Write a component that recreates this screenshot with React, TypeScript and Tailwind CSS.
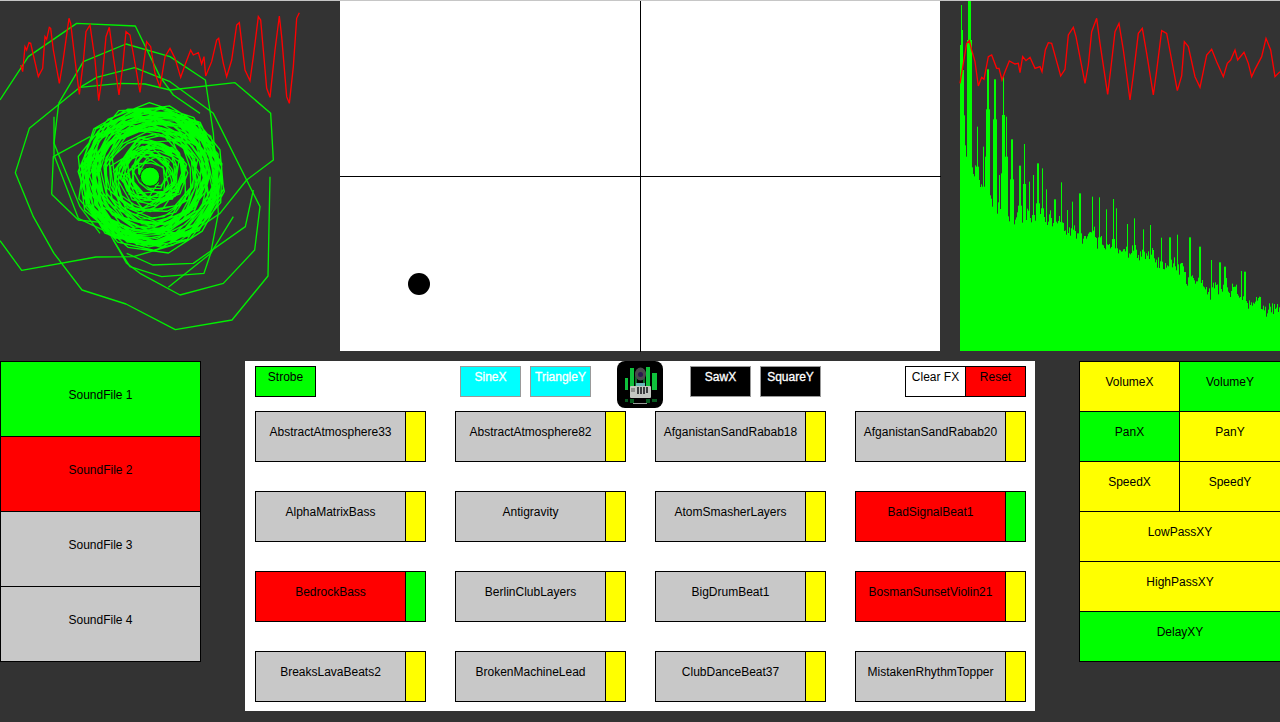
const trackRows = [
  [
    { name: 'AbstractAtmosphere33' },
    { name: 'AbstractAtmosphere82' },
    { name: 'AfganistanSandRabab18' },
    { name: 'AfganistanSandRabab20' },
  ],
  [
    { name: 'AlphaMatrixBass' },
    { name: 'Antigravity' },
    { name: 'AtomSmasherLayers' },
    { name: 'BadSignalBeat1', playing: true, looped: true },
  ],
  [
    { name: 'BedrockBass', playing: true, looped: true },
    { name: 'BerlinClubLayers' },
    { name: 'BigDrumBeat1' },
    { name: 'BosmanSunsetViolin21', playing: true },
  ],
  [
    { name: 'BreaksLavaBeats2' },
    { name: 'BrokenMachineLead' },
    { name: 'ClubDanceBeat37' },
    { name: 'MistakenRhythmTopper' },
  ],
]

const tracks = trackRows.flat()

// all canvas drawings use 3x coordinates, read off the zoomed reference
const leftWave =
  '62,195 68,215 75,140 80,150 87,128 92,130 100,165 115,230 128,205 135,110 140,118 148,82 152,85 160,150 178,250 188,190 207,55 212,70 225,180 238,283 250,185 258,95 270,75 285,180 296,302 308,220 318,110 328,82 340,170 357,285 368,200 378,95 390,105 405,190 420,277 430,200 440,125 452,140 465,220 480,262 495,170 510,145 525,175 542,232 555,195 572,150 580,165 595,158 605,192 612,170 617,228 635,185 650,120 656,115 670,190 680,230 695,180 710,75 718,68 735,210 750,242 760,170 775,50 782,60 800,265 810,292 825,150 838,48 845,110 860,290 868,310 880,200 890,55 898,38'

const rightWave =
  '60,250 70,190 80,130 88,122 95,150 105,185 115,258 125,232 132,238 145,170 155,165 170,205 177,205 186,240 195,215 208,183 225,192 235,190 240,218 248,170 258,182 270,172 278,190 285,205 300,200 306,215 316,150 325,128 335,130 362,228 375,208 385,105 400,82 408,110 435,250 445,195 455,95 470,55 480,130 503,283 512,210 525,95 537,70 550,150 570,300 580,225 595,100 607,85 620,160 640,285 650,212 665,92 680,100 695,180 712,272 725,228 733,125 745,140 765,230 780,262 800,165 815,148 830,185 850,230 862,190 872,180 885,150 893,180 912,157 925,190 935,230 945,208 965,170 978,115 992,150 1005,230 1020,215'

const outerTraces = [
  '810,530 804,828 696,960 526,989 378,912 246,870 162,760 100,650 46,518 88,385 240,262 360,250 435,252 510,270 705,248 812,340 820,480 740,540 660,640 520,735 400,770 288,771 65,811 0,722',
  '0,300 85,170 230,70 406,78 480,230 520,285 600,340',
  '176,310 250,185 378,132 510,170 616,240 640,400 655,640 632,760 612,820 485,830 390,800 340,720',
  '176,310 162,430 240,620 300,700',
  '162,350 162,465 235,655 330,700',
  '155,583 160,470 270,410',
  '155,583 235,660 330,670',
  '240,262 290,232 404,203 510,245 640,340 780,620 764,750 670,850 540,885 420,820 380,790 300,650',
  '760,570 736,680 580,790 458,795 380,760',
  '505,862 632,760 700,650',
]

function seeded(seed: number) {
  let value = seed
  return () => {
    value = (value * 16807) % 2147483647
    return value / 2147483647
  }
}

function buildSpiral() {
  const random = seeded(4711)
  const points: string[] = []
  let angle = 0
  for (let i = 0; i < 680; i++) {
    angle += 0.5 + random() * 0.2
    const swell = 0.5 + 0.5 * Math.sin(i * 0.031)
    const radius = 45 + Math.pow(swell, 0.8) * 150 + Math.sin(i * 0.19) * 12 + random() * 22
    const x = 450 + Math.sin(i * 0.013) * 18 + Math.cos(angle) * radius
    const y = 530 + Math.cos(i * 0.017) * 16 + Math.sin(angle) * radius
    points.push(`${x.toFixed(1)},${y.toFixed(1)}`)
  }
  return points.join(' ')
}

const envelope = [
  [60, 250], [72, 340], [76, 470], [100, 490], [125, 550], [150, 590], [200, 640], [300, 660],
  [400, 700], [500, 735], [600, 760], [700, 790], [800, 860], [900, 880], [1000, 930], [1020, 920],
]

const spikes = [
  [64, 15], [67, 90], [86, 0], [89, 0], [92, 0], [113, 380], [130, 440], [141, 350], [144, 208], [165, 238], [178, 525],
  [188, 400], [191, 225], [200, 350], [216, 418], [240, 497], [254, 432], [268, 545], [280, 525], [294, 490],
  [308, 505], [320, 568], [345, 598], [364, 547], [382, 630], [397, 605], [420, 580], [458, 590], [478, 592],
  [500, 628], [520, 597], [530, 625], [562, 672], [584, 655], [610, 688], [632, 675], [665, 713], [690, 712],
  [712, 704], [750, 712], [780, 740], [815, 780], [840, 787], [855, 800], [905, 813], [915, 815],
]

function buildSpectrum() {
  const random = seeded(913)
  let path = ''
  let bump = 0
  for (let i = 0; i < 320; i++) {
    const x = 60 + i * 3
    let seg = 0
    while (seg < envelope.length - 2 && envelope[seg + 1][0] < x) seg++
    const [x0, y0] = envelope[seg]
    const [x1, y1] = envelope[seg + 1]
    // slow wander plus per-bar jitter gives the lumpy top edge
    bump = bump * 0.7 + (random() - 0.5) * 34
    let top = y0 + ((y1 - y0) * (x - x0)) / (x1 - x0) + bump + 18 - random() * 30
    for (const [sx, sy] of spikes) {
      if (Math.abs(sx - (x + 1.5)) <= 1.5) top = Math.min(top, sy)
      else if (Math.abs(sx - (x + 1.5)) <= 4.5) top = Math.min(top, sy + 120)
    }
    path += `M${x + 1.5} 1053V${top.toFixed(0)}`
  }
  return path
}

const spiral = buildSpiral()
const spectrum = buildSpectrum()

function Oscilloscope() {
  return (
    <svg className="w-[340px] h-[350px] shrink-0" viewBox="0 3 1020 1050" fill="none">
      {outerTraces.map((points, index) => (
        <polyline key={index} points={points} stroke="#00f000" strokeWidth="4" strokeLinejoin="round" />
      ))}
      <polyline points={spiral} stroke="#00ff00" strokeWidth="4" strokeLinejoin="round" />
      <polyline points={leftWave} stroke="#ff0000" strokeWidth="4" />
      <circle cx="450" cy="530" r="29" fill="#00ff00" stroke="#222222" strokeWidth="3" />
    </svg>
  )
}

function XYPad() {
  return (
    <svg className="w-[600px] h-[350px] shrink-0 bg-white overflow-visible" viewBox="0 0 600 350">
      <path d="M300.5 0V351M0 175.5H601" stroke="#000000" strokeWidth="1" fill="none" />
      <circle cx="79" cy="283" r="11" fill="#000000" />
    </svg>
  )
}

function Spectrum() {
  return (
    <svg className="w-[340px] h-[350px] shrink-0" viewBox="0 3 1020 1050" fill="none">
      <path d={spectrum} stroke="#00ff00" strokeWidth="3" />
      <polyline points={rightWave} stroke="#ff0000" strokeWidth="4" />
    </svg>
  )
}

function Logo() {
  return (
    <svg className="w-[46px] h-[47px] rounded-lg shrink-0" viewBox="0 0 46 47">
      <rect width="46" height="47" fill="#000000" />
      <path d="M8 17h3v12H8zM13 7h4v22h-4zM29 6h4v21h-4zM35 12h5v17h-5z" fill="#0fc23c" />
      <path d="M18 12h2v14h-2zM26 9h2v16h-2z" fill="#0a6b26" />
      <path d="M8 38h3v3H8zM13 38h4v4h-4zM29 38h4v4h-4zM35 38h5v3h-5z" fill="#075c20" />
      <ellipse cx="23.5" cy="13" rx="5.5" ry="6.5" fill="#4b4a4c" />
      <circle cx="23.5" cy="13.5" r="2.5" fill="#2b1a4d" />
      <rect x="19" y="22" width="9" height="3" fill="#66b7b5" />
      <rect x="13" y="25" width="21" height="12" rx="1" fill="#c4c8c2" />
      <path d="M20 26h2v7h-2zM23 26h2v7h-2zM26 26h2v7h-2zM29 26h2v6h-2z" fill="#3c3f40" />
      <rect x="14" y="27" width="4" height="4" fill="#8e918d" />
      <rect x="16" y="42" width="14" height="1" fill="#9a9a9a" />
    </svg>
  )
}

function App() {
  return (
    <div className="w-full h-[722px] bg-[#333333] overflow-hidden font-['Liberation_Sans',Arial,sans-serif] text-xs text-black">
      <div className="h-px bg-[#c6c6c6]" />

      {/* Canvases */}
      <div className="flex h-[350px]">
        <Oscilloscope />
        <XYPad />
        <Spectrum />
      </div>

      <div className="flex items-start mt-[10px]">
        {/* Sound files */}
        <div className="flex flex-col w-[201px] shrink-0">
          <button className="h-[76px] border border-black bg-[#00ff00] pb-2">SoundFile 1</button>
          <button className="h-[76px] -mt-px border border-black bg-[#ff0000] pb-2">SoundFile 2</button>
          <button className="h-[76px] -mt-px border border-black bg-[#c8c8c8] pb-2">SoundFile 3</button>
          <button className="h-[76px] -mt-px border border-black bg-[#c8c8c8] pb-2">SoundFile 4</button>
        </div>

        {/* Samples */}
        <div className="ml-[44px] w-[790px] h-[350px] shrink-0 bg-white pl-[10px]">
          <div className="flex items-start h-[50px]">
            <button className="w-[61px] h-[31px] mt-[5px] border border-black bg-[#00ff00] pb-2.5">Strobe</button>
            <button className="w-[61px] h-[31px] mt-[5px] ml-[144px] border border-[#999999] bg-[#00ffff] text-white pb-2.5 [-webkit-text-stroke:0.3px_white]">SineX</button>
            <button className="w-[61px] h-[31px] mt-[5px] ml-[9px] border border-[#999999] bg-[#00ffff] text-white pb-2.5 [-webkit-text-stroke:0.3px_white]">TriangleY</button>
            <div className="ml-[26px]">
              <Logo />
            </div>
            <button className="w-[61px] h-[31px] mt-[5px] ml-[27px] border border-[#999999] bg-black text-white pb-2.5 [-webkit-text-stroke:0.3px_white]">SawX</button>
            <button className="w-[61px] h-[31px] mt-[5px] ml-[9px] border border-[#999999] bg-black text-white pb-2.5 [-webkit-text-stroke:0.3px_white]">SquareY</button>
            <button className="w-[61px] h-[31px] mt-[5px] ml-[84px] border border-black bg-white pb-2.5">Clear FX</button>
            <button className="w-[61px] h-[31px] mt-[5px] -ml-px border border-black bg-[#ff0000] pb-2.5">Reset</button>
          </div>

          <div className="grid grid-cols-[repeat(4,200px)] gap-y-[29px]">
            {tracks.map((track) => (
              <div key={track.name} className="flex h-[51px]">
                <button className={`w-[151px] border border-black pb-2.5 ${track.playing ? 'bg-[#ff0000]' : 'bg-[#c8c8c8]'}`}>
                  {track.name}
                </button>
                <button className={`w-[21px] -ml-px border border-black ${track.looped ? 'bg-[#00ff00]' : 'bg-[#ffff00]'}`} />
              </div>
            ))}
          </div>
        </div>

        {/* Effects */}
        <div className="ml-[44px] w-[202px] shrink-0 flex flex-col">
          <div className="flex h-[51px]">
            <button className="w-[101px] border border-black bg-[#ffff00] pb-2.5">VolumeX</button>
            <button className="w-[102px] -ml-px border border-black bg-[#00ff00] pb-2.5">VolumeY</button>
          </div>
          <div className="flex h-[51px] -mt-px">
            <button className="w-[101px] border border-black bg-[#00ff00] pb-2.5">PanX</button>
            <button className="w-[102px] -ml-px border border-black bg-[#ffff00] pb-2.5">PanY</button>
          </div>
          <div className="flex h-[51px] -mt-px">
            <button className="w-[101px] border border-black bg-[#ffff00] pb-2.5">SpeedX</button>
            <button className="w-[102px] -ml-px border border-black bg-[#ffff00] pb-2.5">SpeedY</button>
          </div>
          <button className="h-[51px] -mt-px border border-black bg-[#ffff00] pb-2.5">LowPassXY</button>
          <button className="h-[51px] -mt-px border border-black bg-[#ffff00] pb-2.5">HighPassXY</button>
          <button className="h-[51px] -mt-px border border-black bg-[#00ff00] pb-2.5">DelayXY</button>
        </div>
      </div>
    </div>
  )
}

export default App
